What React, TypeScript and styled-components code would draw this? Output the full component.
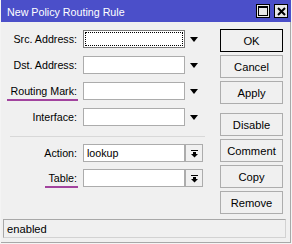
import React from "react";
import styled, { createGlobalStyle } from "styled-components";

const Global = createGlobalStyle`
  html, body { margin: 0; padding: 0; background: #f0f0f0; }
  * { box-sizing: border-box; }
`;

const Window = styled.div`
  width: 292px;
  height: 244px;
  display: flex;
  flex-direction: column;
  background: #f0f0f0;
  border-left: 1px solid #f4f4f4;
  border-right: 1px solid #f4f4f4;
  border-bottom: 1px solid #f4f4f4;
  font-family: "Liberation Sans", Arial, sans-serif;
  font-size: 10.7px;
  color: #000;
`;

const TitleBar = styled.div`
  height: 22px;
  flex: none;
  background: #4b4fc9;
  display: flex;
  align-items: center;
  padding: 0 3px 0 6px;
`;

const Title = styled.div`
  flex: 1;
  color: #fff;
  font-size: 10.7px;
  padding-top: 1px;
`;

const TitleButton = styled.div<{ $gap?: number }>`
  width: 14px;
  height: 14px;
  margin-left: ${(p) => p.$gap ?? 0}px;
  background: #e8e8e8;
  border: 1px solid #000;
  display: flex;
  align-items: center;
  justify-content: center;
`;

const Frame = styled.div`
  flex: 1;
  display: flex;
  flex-direction: column;
  border-right: 1px solid #a8a8a8;
  border-bottom: 1px solid #a8a8a8;
`;

const Body = styled.div`
  display: flex;
  flex: 1;
`;

const Form = styled.div`
  width: 218px;
  padding-top: 8px;
  display: flex;
  flex-direction: column;
`;

const Row = styled.div<{ $mb: number }>`
  display: flex;
  align-items: center;
  height: 18px;
  margin-bottom: ${(p) => p.$mb}px;
`;

const Label = styled.div<{ $mark?: boolean }>`
  width: 76px;
  text-align: right;
  white-space: nowrap;
  display: flex;
  justify-content: flex-end;
  span {
    position: relative;
  }
  ${(p) =>
    p.$mark
      ? `span::after { content: ""; position: absolute; left: -3px; right: -1px; bottom: -4px; height: 2px; background: #a2449e; }`
      : ""}
`;

const Input = styled.div<{ $w: number; $focus?: boolean }>`
  margin-left: 6px;
  width: ${(p) => p.$w}px;
  height: 18px;
  background: #fff;
  border: 1px solid ${(p) => (p.$focus ? "#7a7a7a" : "#acacac")};
  position: relative;
  display: flex;
  align-items: center;
  padding-left: 3px;
  ${(p) =>
    p.$focus
      ? `&::after { content: ""; position: absolute; inset: 1px; border: 1px dotted #000; }`
      : ""}
`;

const DropArrow = styled.div`
  margin-left: 5px;
  width: 0;
  height: 0;
  border-left: 4px solid transparent;
  border-right: 4px solid transparent;
  border-top: 5px solid #000;
`;

const ComboButton = styled.div`
  width: 18px;
  height: 18px;
  margin-left: 0;
  border: 1px solid #acacac;
  background: #f0f0f0;
  display: flex;
  align-items: center;
  justify-content: center;
`;

const Separator = styled.div`
  height: 1px;
  background: #d8d8d8;
  margin: 2px 14px 7px 9px;
`;

const Buttons = styled.div`
  width: 63px;
  margin-left: 1px;
  padding-top: 7px;
  display: flex;
  flex-direction: column;
`;

const Button = styled.div<{ $default?: boolean; $mt?: number }>`
  height: 23px;
  margin-top: ${(p) => p.$mt ?? 3}px;
  border: 1px solid ${(p) => (p.$default ? "#000" : "#adadad")};
  background: #f0f0f0;
  display: flex;
  align-items: center;
  justify-content: center;
  font-size: 11.2px;
`;

const StatusBar = styled.div`
  height: 19px;
  margin: 0 4px 4px 2px;
  border: 1px solid #d2d2d2;
  border-top-color: #a8a8a8;
  border-left-color: #a8a8a8;
  display: flex;
  align-items: center;
  padding-left: 3px;
  font-size: 11.2px;
`;

const ComboIcon = () => (
  <svg width="9" height="9" viewBox="0 0 9 9">
    <rect x="1" y="1" width="7" height="1" fill="#000" />
    <rect x="3" y="3" width="3" height="2" fill="#000" />
    <polygon points="1,5 8,5 4.5,8.5" fill="#000" />
  </svg>
);

type Field = { label: string; mark?: boolean; focus?: boolean; mb: number };

const topFields: Field[] = [
  { label: "Src. Address:", focus: true, mb: 8 },
  { label: "Dst. Address:", mb: 8 },
  { label: "Routing Mark:", mark: true, mb: 8 },
  { label: "Interface:", mb: 8 },
];

const buttons: { text: string; def?: boolean; mt?: number }[] = [
  { text: "OK", def: true, mt: 0 },
  { text: "Cancel" },
  { text: "Apply" },
  { text: "Disable", mt: 9 },
  { text: "Comment" },
  { text: "Copy" },
  { text: "Remove" },
];

export default function App() {
  return (
    <>
      <Global />
      <Window>
        <TitleBar>
          <Title>New Policy Routing Rule</Title>
          <TitleButton>
            <svg width="10" height="10" viewBox="0 0 10 10">
              <rect x="0.5" y="0.5" width="9" height="9" fill="none" stroke="#000" />
              <rect x="0" y="0" width="10" height="2" fill="#000" />
            </svg>
          </TitleButton>
          <TitleButton $gap={4}>
            <svg width="9" height="9" viewBox="0 0 9 9">
              <path d="M1 1 L8 8 M8 1 L1 8" stroke="#000" strokeWidth="2" />
            </svg>
          </TitleButton>
        </TitleBar>
        <Frame>
          <Body>
            <Form>
              {topFields.map((f) => (
                <Row key={f.label} $mb={f.mb}>
                  <Label $mark={f.mark}>
                    <span>{f.label}</span>
                  </Label>
                  <Input $w={102} $focus={f.focus} />
                  <DropArrow />
                </Row>
              ))}
              <Separator />
              <Row $mb={7}>
                <Label>
                  <span>Action:</span>
                </Label>
                <Input $w={102}>lookup</Input>
                <ComboButton>
                  <ComboIcon />
                </ComboButton>
              </Row>
              <Row $mb={0}>
                <Label $mark>
                  <span>Table:</span>
                </Label>
                <Input $w={102} />
                <ComboButton>
                  <ComboIcon />
                </ComboButton>
              </Row>
            </Form>
            <Buttons>
              {buttons.map((b) => (
                <Button key={b.text} $default={b.def} $mt={b.mt}>
                  {b.text}
                </Button>
              ))}
            </Buttons>
          </Body>
          <StatusBar>enabled</StatusBar>
        </Frame>
      </Window>
    </>
  );
}
